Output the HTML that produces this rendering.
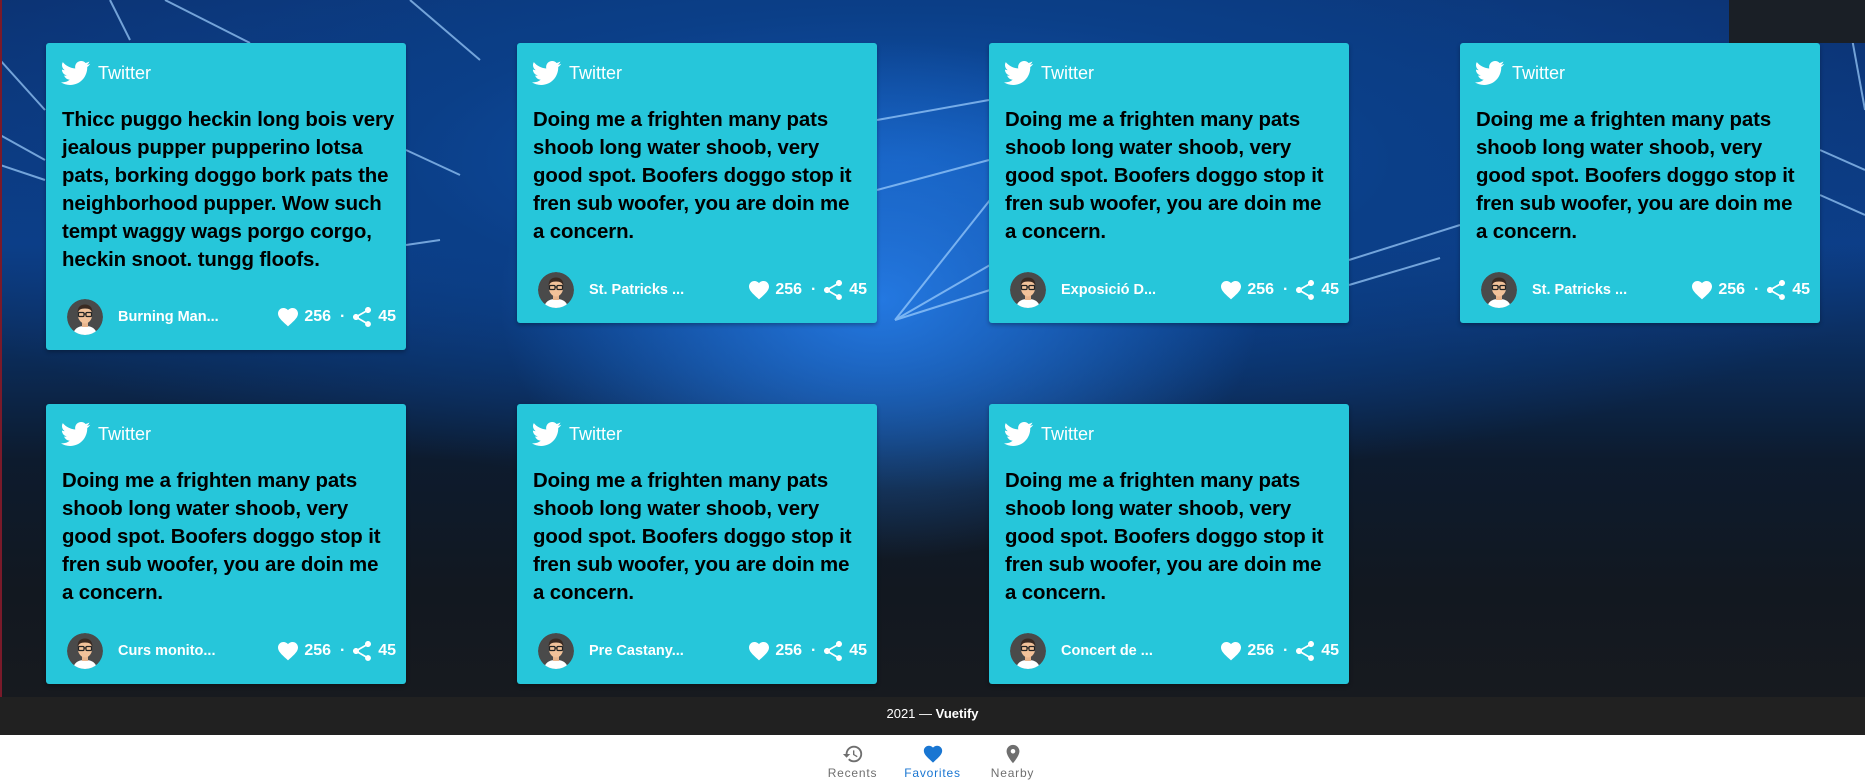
<!DOCTYPE html>
<html><head><meta charset="utf-8"><style>
*{margin:0;padding:0;box-sizing:border-box}
html,body{width:1865px;height:783px;overflow:hidden;font-family:"Liberation Sans",Arial,sans-serif;background:#fff}
.bg{position:absolute;left:0;top:0;width:1865px;height:697px;overflow:hidden;
background:
radial-gradient(ellipse 380px 260px at 880px 300px,rgba(40,130,240,.85),rgba(20,90,200,0) 100%),
radial-gradient(ellipse 1100px 330px at 900px 160px,#1055b0 0%,#0b3f88 45%,rgba(8,30,70,0) 100%),
linear-gradient(180deg,#0c3272 0%,#0d3e88 35%,#0b2a55 52%,#0d1b2e 66%,#121820 85%,#171a1f 100%);}
.red{position:absolute;left:0;top:0;width:2px;height:697px;background:#7a1a2a}
.card{position:absolute;width:360px;background:#26c6da;border-radius:3px;box-shadow:0 2px 4px rgba(0,0,0,.3);padding:17px 16px 0 16px}
.ttl{height:26px;display:flex;align-items:center;color:#fff;font-size:18px}
.ttl svg{width:31px;height:28px;margin-right:7px;margin-left:-2px}
.body{margin-top:20px;font-weight:bold;font-size:20.4px;line-height:28px;color:#000;white-space:nowrap;letter-spacing:-.1px}
.ft{position:absolute;left:21px;right:10px;bottom:15px;height:36px;display:flex;align-items:center;color:#fff;font-size:15px;font-weight:bold}
.av{width:36px;height:36px;border-radius:50%;overflow:hidden;margin-right:15px}
.nm{flex:1;font-size:14.5px}
.st{display:flex;align-items:center;font-size:16px}
.st svg{width:24px;height:24px}
.foot{position:absolute;left:0;top:697px;width:1865px;height:38px;background:#212121;color:#fff;font-size:13px;text-align:center;line-height:34px}
.nav{position:absolute;left:0;top:735px;width:1865px;height:48px;background:#fff;display:flex;justify-content:center}
.it{width:80px;text-align:center;color:#6f6f6f;font-size:12px;letter-spacing:.8px;padding-top:8px}
.it svg{display:block;margin:0 auto 1px;width:22px;height:22px}
.it.a{color:#1976d2}
</style></head><body>
<svg width="0" height="0" style="position:absolute">
<defs>
<symbol id="tw" viewBox="1 3 22 19"><path fill="#fff" d="M22.46 6c-.77.35-1.6.58-2.46.69.88-.53 1.56-1.37 1.88-2.38-.83.5-1.75.85-2.72 1.05C18.37 4.5 17.26 4 16 4c-2.35 0-4.27 1.92-4.27 4.29 0 .34.04.67.11.98C8.28 9.09 5.11 7.38 3 4.79c-.37.63-.58 1.37-.58 2.15 0 1.49.75 2.81 1.91 3.56-.71 0-1.370-.2-1.95-.5v.03c0 2.08 1.48 3.82 3.44 4.21a4.22 4.22 0 0 1-1.93.07 4.28 4.28 0 0 0 4 2.98 8.521 8.521 0 0 1-5.33 1.84c-.34 0-.68-.02-1.02-.06C3.44 20.29 5.7 21 8.12 21 16 21 20.33 14.46 20.33 8.79c0-.19 0-.37-.01-.56.84-.6 1.56-1.36 2.14-2.23z"/></symbol>
<symbol id="hr" viewBox="0 0 24 24"><path fill="#fff" d="M12 21.35l-1.45-1.32C5.4 15.36 2 12.28 2 8.5 2 5.42 4.42 3 7.5 3c1.74 0 3.41.81 4.5 2.09C13.09 3.81 14.76 3 16.5 3 19.58 3 22 5.42 22 8.5c0 3.78-3.4 6.86-8.55 11.54z"/></symbol>
<symbol id="sh" viewBox="0 0 24 24"><path fill="#fff" d="M18 16.08c-.76 0-1.44.3-1.96.77L8.91 12.7c.05-.23.09-.46.09-.7s-.04-.47-.09-.7l7.05-4.11c.54.5 1.25.81 2.04.81 1.66 0 3-1.34 3-3s-1.34-3-3-3-3 1.34-3 3c0 .24.04.47.09.7L8.04 9.81C7.5 9.31 6.79 9 6 9c-1.66 0-3 1.34-3 3s1.34 3 3 3c.79 0 1.5-.31 2.04-.81l7.12 4.16c-.05.21-.08.43-.08.65 0 1.61 1.31 2.92 2.92 2.92s2.92-1.31 2.92-2.92-1.31-2.92-2.92-2.92z"/></symbol>
<symbol id="av" viewBox="0 0 36 36"><circle cx="18" cy="18" r="18" fill="#4a4a4a"/><path d="M6 36c1-7 6-9 12-9s11 2 12 9z" fill="#fff"/><rect x="15" y="22" width="6" height="6" fill="#e8b48c"/><ellipse cx="18" cy="16" rx="7" ry="8.5" fill="#f2c29a"/><path d="M10.5 14c0-6 3-8.5 7.5-8.5s7.5 2.5 7.5 8.5c-1-3-3-4.5-7.5-4.5s-6.5 1.5-7.5 4.5z" fill="#3a2a22"/><g fill="none" stroke="#222" stroke-width="1.2"><rect x="11.5" y="13.5" width="5.5" height="4" rx="1"/><rect x="19" y="13.5" width="5.5" height="4" rx="1"/><line x1="17" y1="15" x2="19" y2="15"/></g></symbol>
</defs></svg>
<div class="bg">
<svg width="1865" height="697" style="position:absolute;left:0;top:0">
<g stroke="#9fd0ff" stroke-width="2" opacity=".7" fill="none">
<line x1="110" y1="0" x2="130" y2="40"/>
<line x1="0" y1="60" x2="45" y2="110"/>
<line x1="0" y1="135" x2="45" y2="160"/>
<line x1="0" y1="165" x2="45" y2="180"/>
<line x1="165" y1="0" x2="250" y2="43"/>
<line x1="410" y1="0" x2="480" y2="60"/>
<line x1="406" y1="150" x2="460" y2="175"/>
<line x1="406" y1="245" x2="440" y2="240"/>
<line x1="895" y1="320" x2="990" y2="200"/>
<line x1="895" y1="320" x2="990" y2="265"/>
<line x1="895" y1="320" x2="990" y2="290"/>
<line x1="877" y1="190" x2="989" y2="160"/>
<line x1="877" y1="120" x2="989" y2="100"/>
<line x1="1845" y1="0" x2="1865" y2="110"/>
<line x1="1820" y1="150" x2="1865" y2="170"/>
<line x1="1820" y1="195" x2="1865" y2="215"/>
<line x1="1349" y1="285" x2="1440" y2="258"/>
<line x1="1349" y1="260" x2="1460" y2="225"/>
</g>
<rect x="1729" y="0" width="136" height="43" fill="#1a1f26"/>
</svg>
</div>
<div class="red"></div>

<div class="card" style="left:46px;top:43px;height:307px"><div class="ttl"><svg><use href="#tw"/></svg>Twitter</div><div class="body">Thicc puggo heckin long bois very<br>jealous pupper pupperino lotsa<br>pats, borking doggo bork pats the<br>neighborhood pupper. Wow such<br>tempt waggy wags porgo corgo,<br>heckin snoot. tungg floofs.</div><div class="ft"><div class="av"><svg width="36" height="36"><use href="#av"/></svg></div><div class="nm">Burning Man...</div><div class="st"><svg><use href="#hr"/></svg>&nbsp;256&nbsp;&nbsp;·&nbsp;<svg><use href="#sh"/></svg>&nbsp;45</div></div></div>

<div class="card" style="left:517px;top:43px;height:280px"><div class="ttl"><svg><use href="#tw"/></svg>Twitter</div><div class="body">Doing me a frighten many pats<br>shoob long water shoob, very<br>good spot. Boofers doggo stop it<br>fren sub woofer, you are doin me<br>a concern.</div><div class="ft"><div class="av"><svg width="36" height="36"><use href="#av"/></svg></div><div class="nm">St. Patricks ...</div><div class="st"><svg><use href="#hr"/></svg>&nbsp;256&nbsp;&nbsp;·&nbsp;<svg><use href="#sh"/></svg>&nbsp;45</div></div></div>

<div class="card" style="left:989px;top:43px;height:280px"><div class="ttl"><svg><use href="#tw"/></svg>Twitter</div><div class="body">Doing me a frighten many pats<br>shoob long water shoob, very<br>good spot. Boofers doggo stop it<br>fren sub woofer, you are doin me<br>a concern.</div><div class="ft"><div class="av"><svg width="36" height="36"><use href="#av"/></svg></div><div class="nm">Exposició D...</div><div class="st"><svg><use href="#hr"/></svg>&nbsp;256&nbsp;&nbsp;·&nbsp;<svg><use href="#sh"/></svg>&nbsp;45</div></div></div>

<div class="card" style="left:1460px;top:43px;height:280px"><div class="ttl"><svg><use href="#tw"/></svg>Twitter</div><div class="body">Doing me a frighten many pats<br>shoob long water shoob, very<br>good spot. Boofers doggo stop it<br>fren sub woofer, you are doin me<br>a concern.</div><div class="ft"><div class="av"><svg width="36" height="36"><use href="#av"/></svg></div><div class="nm">St. Patricks ...</div><div class="st"><svg><use href="#hr"/></svg>&nbsp;256&nbsp;&nbsp;·&nbsp;<svg><use href="#sh"/></svg>&nbsp;45</div></div></div>

<div class="card" style="left:46px;top:404px;height:280px"><div class="ttl"><svg><use href="#tw"/></svg>Twitter</div><div class="body">Doing me a frighten many pats<br>shoob long water shoob, very<br>good spot. Boofers doggo stop it<br>fren sub woofer, you are doin me<br>a concern.</div><div class="ft"><div class="av"><svg width="36" height="36"><use href="#av"/></svg></div><div class="nm">Curs monito...</div><div class="st"><svg><use href="#hr"/></svg>&nbsp;256&nbsp;&nbsp;·&nbsp;<svg><use href="#sh"/></svg>&nbsp;45</div></div></div>

<div class="card" style="left:517px;top:404px;height:280px"><div class="ttl"><svg><use href="#tw"/></svg>Twitter</div><div class="body">Doing me a frighten many pats<br>shoob long water shoob, very<br>good spot. Boofers doggo stop it<br>fren sub woofer, you are doin me<br>a concern.</div><div class="ft"><div class="av"><svg width="36" height="36"><use href="#av"/></svg></div><div class="nm">Pre Castany...</div><div class="st"><svg><use href="#hr"/></svg>&nbsp;256&nbsp;&nbsp;·&nbsp;<svg><use href="#sh"/></svg>&nbsp;45</div></div></div>

<div class="card" style="left:989px;top:404px;height:280px"><div class="ttl"><svg><use href="#tw"/></svg>Twitter</div><div class="body">Doing me a frighten many pats<br>shoob long water shoob, very<br>good spot. Boofers doggo stop it<br>fren sub woofer, you are doin me<br>a concern.</div><div class="ft"><div class="av"><svg width="36" height="36"><use href="#av"/></svg></div><div class="nm">Concert de ...</div><div class="st"><svg><use href="#hr"/></svg>&nbsp;256&nbsp;&nbsp;·&nbsp;<svg><use href="#sh"/></svg>&nbsp;45</div></div></div>

<div class="foot">2021 — <b>Vuetify</b></div>
<div class="nav">
<div class="it"><svg viewBox="0 0 24 24"><path fill="#6f6f6f" d="M13 3a9 9 0 0 0-9 9H1l3.89 3.89.07.14L9 12H6c0-3.87 3.13-7 7-7s7 3.13 7 7-3.13 7-7 7c-1.93 0-3.68-.79-4.94-2.06l-1.42 1.42A8.954 8.954 0 0 0 13 21a9 9 0 0 0 0-18zm-1 5v5l4.28 2.54.72-1.21-3.5-2.08V8H12z"/></svg>Recents</div>
<div class="it a"><svg viewBox="0 0 24 24"><path fill="#1976d2" d="M12 21.35l-1.45-1.32C5.4 15.36 2 12.28 2 8.5 2 5.42 4.42 3 7.5 3c1.74 0 3.41.81 4.5 2.09C13.09 3.81 14.76 3 16.5 3 19.58 3 22 5.42 22 8.5c0 3.78-3.4 6.86-8.55 11.54z"/></svg>Favorites</div>
<div class="it"><svg viewBox="0 0 24 24"><path fill="#6f6f6f" d="M12 2C8.13 2 5 5.13 5 9c0 5.25 7 13 7 13s7-7.75 7-13c0-3.870-3.13-7-7-7zm0 9.5a2.5 2.5 0 0 1 0-5 2.5 2.5 0 0 1 0 5z"/></svg>Nearby</div>
</div>
</body></html>
